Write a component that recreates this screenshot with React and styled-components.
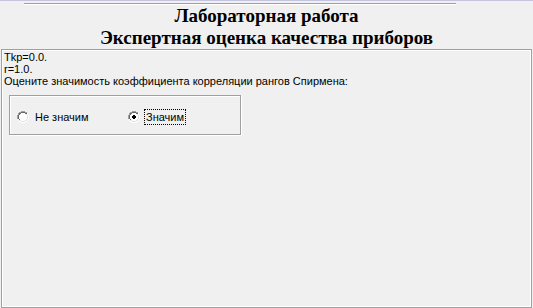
import React from "react";
import styled, { createGlobalStyle } from "styled-components";

const Global = createGlobalStyle`
  html, body { margin: 0; padding: 0; background: #f0f0f0; }
  body { font-family: "Liberation Sans", Arial, sans-serif; color: #000; }
  #root { height: 100vh; }
`;

const Page = styled.div`
  height: 100%;
  display: flex;
  flex-direction: column;
  box-sizing: border-box;
  border-top: 1px solid #c4c4e0;
`;

const Header = styled.header`
  padding-top: 2px;
  display: flex;
  flex-direction: column;
`;

const Divider = styled.div`
  margin-left: 24px;
  width: 432px;
  border-top: 1px solid #a0a0a0;
  border-bottom: 1px solid #fff;
`;

const Title = styled.h1`
  margin: 0;
  font-family: "Liberation Serif", "Times New Roman", serif;
  font-weight: bold;
  font-size: 19px;
  line-height: 22px;
  text-align: center;
`;

const Panel = styled.section`
  flex: 1;
  margin: 0 1px;
  box-sizing: border-box;
  border: 1px solid #a0a0a0;
  box-shadow: inset 1px 1px 0 #fff, inset -1px -1px 0 #fff;
  padding: 1px 2px;
  font-size: 11px;
  line-height: 12px;
`;

const Line = styled.div`
  white-space: nowrap;
`;

const GroupBox = styled.div`
  margin: 8px 0 0 5px;
  width: 232px;
  height: 40px;
  box-sizing: border-box;
  border: 1px solid #a0a0a0;
  box-shadow: inset 1px 1px 0 #fff, 1px 1px 0 #fff;
  padding: 13px 0 0 7px;
  display: flex;
  align-items: flex-start;
`;

const Radio = styled.label`
  display: flex;
  align-items: center;
  width: ${(p) => p.$w}px;
  height: 16px;
  gap: 4px;
`;

const Caption = styled.span`
  padding: 0 1px;
  line-height: 14px;
  border: 1px ${(p) => (p.$focus ? "dotted #000" : "solid transparent")};
`;

const RadioIcon = ({ checked }) => (
  <svg width="12" height="12" viewBox="0 0 12 12" shapeRendering="crispEdges">
    <path d="M4 0h4v1H4zM2 1h2v1H2zM8 1h2v1H8zM1 2h1v2H1zM0 4h1v4H0z" fill="#a0a0a0" />
    <path d="M10 2h1v2h-1zM11 4h1v4h-1zM10 8h1v2h-1zM8 10h2v1H8zM2 10h2v1H2zM4 11h4v1H4zM1 8h1v2H1z" fill="#fff" />
    <path d="M4 1h4v1H4zM2 2h2v1H2zM8 2h2v1H8zM2 3h1v1H2zM1 4h1v4H1zM2 8h1v1H2z" fill="#696969" />
    <path d="M9 3h1v1H9zM10 4h1v4h-1zM9 8h1v1H9zM8 9h2v1H8zM2 9h2v1H2zM4 10h4v1H4z" fill="#e3e3e3" />
    <path d="M4 2h4v1h1v1h1v4h-1v1h-1v1H4v-1H3v-1H2V4h1V3h1z" fill="#fff" />
    {checked && <path d="M5 4h2v1h1v2h-1v1H5v-1H4V5h1z" fill="#000" />}
  </svg>
);

export default function App() {
  return (
    <>
      <Global />
      <Page>
        <Header>
          <Divider />
          <Title>
            Лабораторная работа
            <br />
            Экспертная оценка качества приборов
          </Title>
        </Header>
        <Panel>
          <Line>Tkp=0.0.</Line>
          <Line>r=1.0.</Line>
          <Line>Оцените значимость коэффициента корреляции рангов Спирмена:</Line>
          <GroupBox>
            <Radio $w={111}>
              <RadioIcon />
              <Caption>Не значим</Caption>
            </Radio>
            <Radio $w={80}>
              <RadioIcon checked />
              <Caption $focus>Значим</Caption>
            </Radio>
          </GroupBox>
        </Panel>
      </Page>
    </>
  );
}
